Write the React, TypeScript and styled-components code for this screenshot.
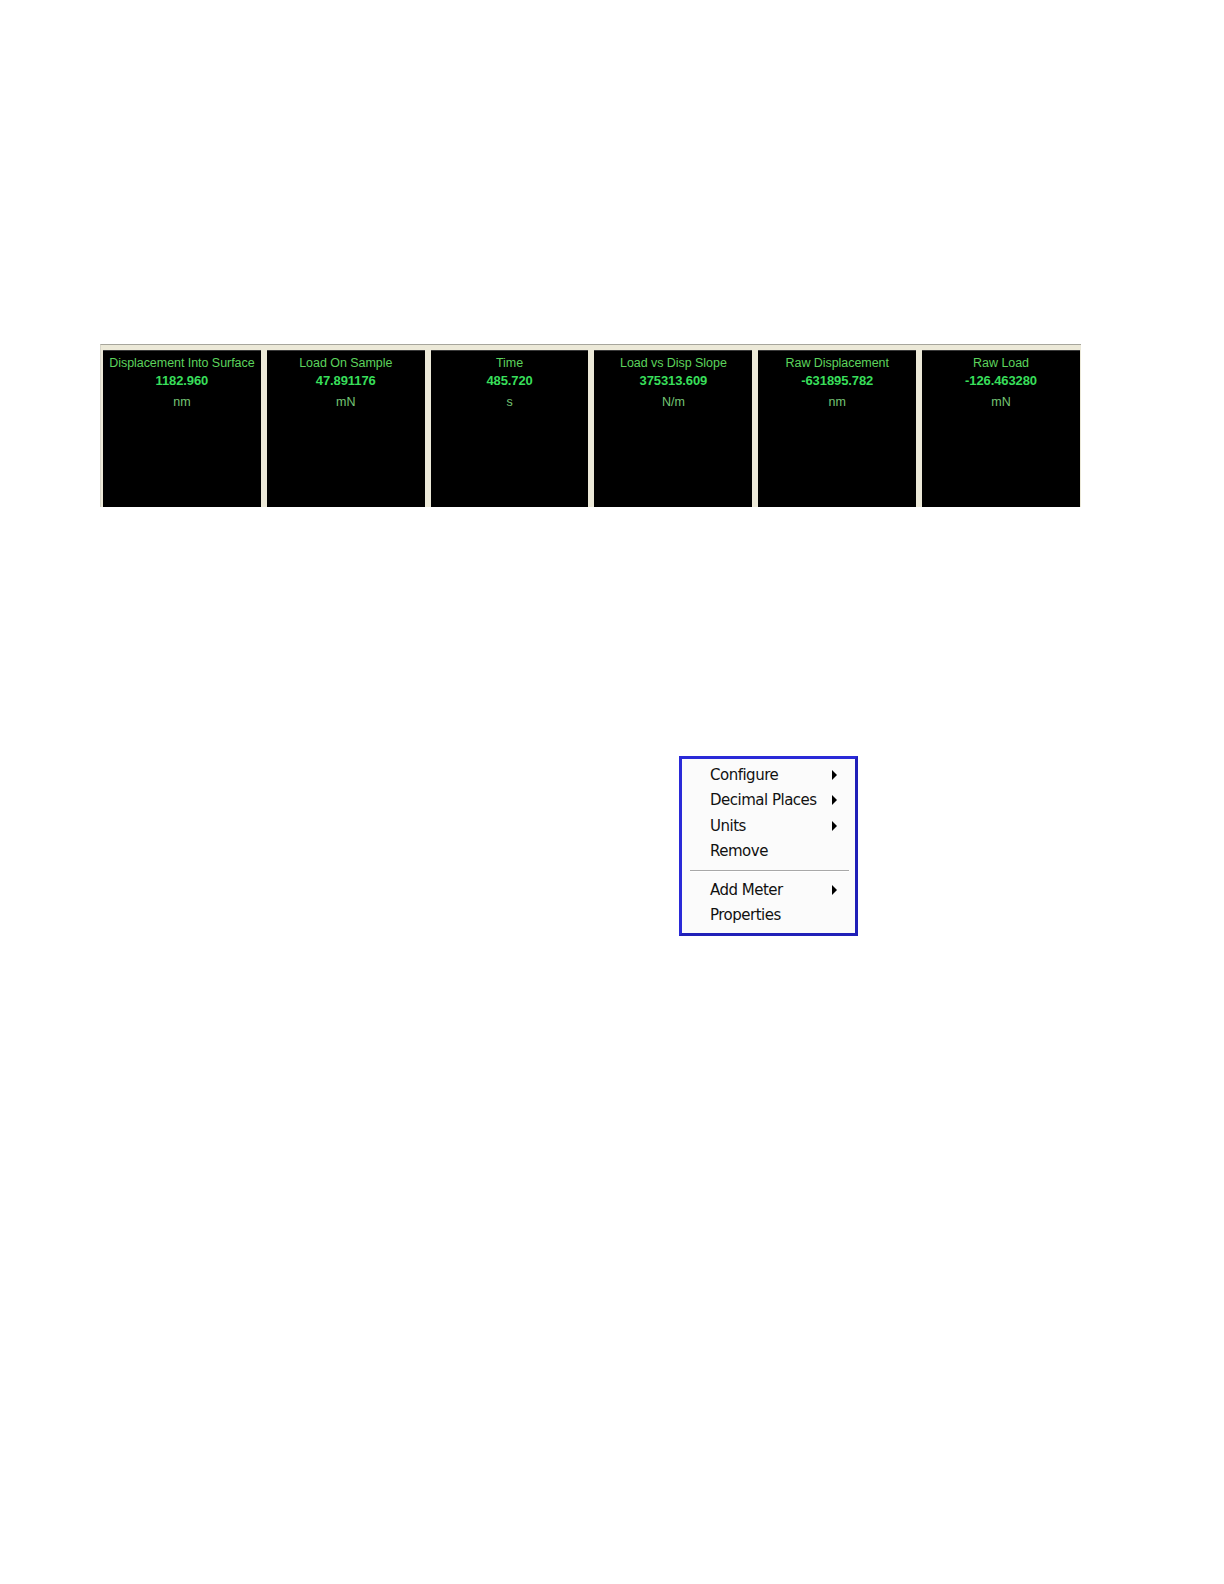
import styled, { createGlobalStyle } from "styled-components";

type Meter = { title: string; value: string; unit: string };

const meters: Meter[] = [
  { title: "Displacement Into Surface", value: "1182.960", unit: "nm" },
  { title: "Load On Sample", value: "47.891176", unit: "mN" },
  { title: "Time", value: "485.720", unit: "s" },
  { title: "Load vs Disp Slope", value: "375313.609", unit: "N/m" },
  { title: "Raw Displacement", value: "-631895.782", unit: "nm" },
  { title: "Raw Load", value: "-126.463280", unit: "mN" },
];

type MenuEntry = { label: string; sub?: boolean; divider?: boolean };

const menuItems: MenuEntry[] = [
  { label: "Configure", sub: true },
  { label: "Decimal Places", sub: true },
  { label: "Units", sub: true },
  { label: "Remove", divider: true },
  { label: "Add Meter", sub: true },
  { label: "Properties" },
];

const App = () => {
  return (
    <>
      <GlobalStyle />
      <StPage>
        <StStrip>
          {meters.map((m) => (
            <StMeter key={m.title}>
              <StTitle>{m.title}</StTitle>
              <StValue>{m.value}</StValue>
              <StUnit>{m.unit}</StUnit>
            </StMeter>
          ))}
        </StStrip>

        <StMenu>
          {menuItems.map((item) => (
            <div key={item.label}>
              <StItem>
                <span>{item.label}</span>
                {item.sub ? <StArrow /> : null}
              </StItem>
              {item.divider ? <StDivider /> : null}
            </div>
          ))}
        </StMenu>
      </StPage>
    </>
  );
};

export default App;

const GlobalStyle = createGlobalStyle`
  html, body {
    margin: 0;
    padding: 0;
    background: #fff;
  }
  body {
    font-family: "Liberation Sans", Arial, sans-serif;
  }
`;

const StPage = styled.div`
  display: flex;
  flex-direction: column;
  align-items: flex-start;
  padding: 344px 0 0 100px;
`;

const StStrip = styled.div`
  display: flex;
  gap: 6px;
  width: 981px;
  box-sizing: border-box;
  padding: 5px 1px 0 2px;
  border-top: 1px solid #a7a69c;
  border-left: 1px solid #d8d6ca;
  background: #ece9d8;
`;

const StMeter = styled.div`
  flex: 1;
  height: 157px;
  display: flex;
  flex-direction: column;
  align-items: center;
  padding-top: 4px;
  box-sizing: border-box;
  background: #000;
  border-top: 1px solid #3a3a3a;
  overflow: hidden;
`;

const StTitle = styled.div`
  font-size: 12.5px;
  line-height: 16px;
  color: #5cd35c;
  letter-spacing: -0.05px;
  white-space: nowrap;
`;

const StValue = styled.div`
  margin-top: 2px;
  font-size: 13px;
  line-height: 16px;
  font-weight: bold;
  color: #38de5a;
  letter-spacing: -0.1px;
`;

const StUnit = styled.div`
  margin-top: 5px;
  font-size: 12.5px;
  line-height: 16px;
  color: #74c474;
`;

const StMenu = styled.div`
  margin: 249px 0 0 579px;
  width: 179px;
  box-sizing: border-box;
  padding: 3px 4px 5px 3px;
  border: 3px solid #2a2ad8;
  border-right-color: #2020b8;
  border-bottom-color: #2020b8;
  background: #fbfbfb;
`;

const StItem = styled.div`
  display: flex;
  align-items: center;
  justify-content: space-between;
  height: 25.5px;
  padding: 0 14px 0 25px;
  font-family: Tahoma, "DejaVu Sans", sans-serif;
  font-size: 15px;
  color: #111;
  letter-spacing: -0.5px;
`;

const StArrow = styled.span`
  width: 0;
  height: 0;
  border-top: 5px solid transparent;
  border-bottom: 5px solid transparent;
  border-left: 5px solid #000;
`;

const StDivider = styled.div`
  margin: 6px 2px 5px 5px;
  height: 1px;
  background: #a8a8a8;
  border-bottom: 1px solid #fff;
`;
